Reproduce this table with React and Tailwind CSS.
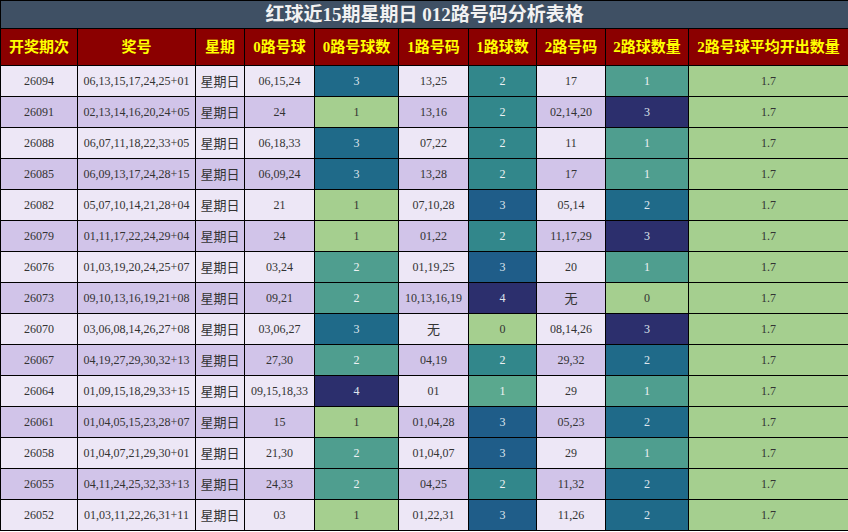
import React from "react";

const rows = [
  ["26094", "06,13,15,17,24,25+01", "06,15,24", 3, "13,25", 2, "17", 1],
  ["26091", "02,13,14,16,20,24+05", "24", 1, "13,16", 2, "02,14,20", 3],
  ["26088", "06,07,11,18,22,33+05", "06,18,33", 3, "07,22", 2, "11", 1],
  ["26085", "06,09,13,17,24,28+15", "06,09,24", 3, "13,28", 2, "17", 1],
  ["26082", "05,07,10,14,21,28+04", "21", 1, "07,10,28", 3, "05,14", 2],
  ["26079", "01,11,17,22,24,29+04", "24", 1, "01,22", 2, "11,17,29", 3],
  ["26076", "01,03,19,20,24,25+07", "03,24", 2, "01,19,25", 3, "20", 1],
  ["26073", "09,10,13,16,19,21+08", "09,21", 2, "10,13,16,19", 4, "无", 0],
  ["26070", "03,06,08,14,26,27+08", "03,06,27", 3, "无", 0, "08,14,26", 3],
  ["26067", "04,19,27,29,30,32+13", "27,30", 2, "04,19", 2, "29,32", 2],
  ["26064", "01,09,15,18,29,33+15", "09,15,18,33", 4, "01", 1, "29", 1],
  ["26061", "01,04,05,15,23,28+07", "15", 1, "01,04,28", 3, "05,23", 2],
  ["26058", "01,04,07,21,29,30+01", "21,30", 2, "01,04,07", 3, "29", 1],
  ["26055", "04,11,24,25,32,33+13", "24,33", 2, "04,25", 2, "11,32", 2],
  ["26052", "01,03,11,22,26,31+11", "03", 1, "01,22,31", 3, "11,26", 2],
];

// colour scale per column (min..max of each column)
const zeroColors = {
  1: "bg-[#a5cf8f] text-[#333]",
  2: "bg-[#4f9e8f] text-[#eef2f4]",
  3: "bg-[#1f6a89] text-[#dfe6ee]",
  4: "bg-[#2c2f6d] text-[#dfe6ee]",
};
const oneColors = {
  0: "bg-[#a5cf8f] text-[#333]",
  1: "bg-[#5aa88e] text-[#eef2f4]",
  2: "bg-[#32878b] text-[#eef2f4]",
  3: "bg-[#1f5d89] text-[#dfe6ee]",
  4: "bg-[#2c2f6d] text-[#dfe6ee]",
};
const twoColors = {
  0: "bg-[#a5cf8f] text-[#333]",
  1: "bg-[#4f9e8f] text-[#eef2f4]",
  2: "bg-[#1f6a89] text-[#dfe6ee]",
  3: "bg-[#2c2f6d] text-[#dfe6ee]",
};

const headers = [
  "开奖期次",
  "奖号",
  "星期",
  "0路号球",
  "0路号球数",
  "1路号码",
  "1路球数",
  "2路号码",
  "2路球数量",
  "2路号球平均开出数量",
];

const font = "font-['Liberation_Serif','Noto_Sans_CJK_SC',serif]";
const cjk = "font-['Noto_Sans_CJK_SC',sans-serif]";

export default function App() {
  return (
    <div className={`w-[848px] h-[532px] bg-white overflow-hidden ${font}`}>
      <table className="w-[848px] table-fixed border-collapse border border-black text-center">
        <colgroup>
          <col className="w-[77px]" />
          <col className="w-[118px]" />
          <col className="w-[49px]" />
          <col className="w-[70px]" />
          <col className="w-[84px]" />
          <col className="w-[70px]" />
          <col className="w-[68px]" />
          <col className="w-[69px]" />
          <col className="w-[83px]" />
          <col className="w-[160px]" />
        </colgroup>
        <thead>
          <tr className="h-[28px]">
            <th
              colSpan={10}
              className="bg-[#3f5064] text-[#f2f2f2] text-[19px] font-bold border border-black p-0 leading-none"
            >
              红球近15期星期日 012路号码分析表格
            </th>
          </tr>
          <tr className="h-[37px] bg-[#8b0000]">
            {headers.map((h) => (
              <th key={h} className="border border-black text-[#ffff00] text-[15px] font-bold p-0 whitespace-nowrap">
                {h}
              </th>
            ))}
          </tr>
        </thead>
        <tbody className="text-[12px] text-[#333]">
          {rows.map((r, i) => {
            const bg = i % 2 === 0 ? "bg-[#ede7f6]" : "bg-[#d1c4e9]";
            const cell = `border border-black p-0 whitespace-nowrap ${bg}`;
            return (
              <tr key={r[0]} className="h-[31px]">
                <td className={cell}>{r[0]}</td>
                <td className={cell}>{r[1]}</td>
                <td className={`${cell} ${cjk} text-[13px]`}>星期日</td>
                <td className={cell}>{r[2]}</td>
                <td className={`border border-black p-0 ${zeroColors[r[3]]}`}>{r[3]}</td>
                <td className={`${cell} ${r[4] === "无" ? cjk + " text-[13px]" : ""}`}>{r[4]}</td>
                <td className={`border border-black p-0 ${oneColors[r[5]]}`}>{r[5]}</td>
                <td className={`${cell} ${r[6] === "无" ? cjk + " text-[13px]" : ""}`}>{r[6]}</td>
                <td className={`border border-black p-0 ${twoColors[r[7]]}`}>{r[7]}</td>
                <td className="border border-black p-0 bg-[#a5cf8f] text-[#333]">1.7</td>
              </tr>
            );
          })}
        </tbody>
      </table>
    </div>
  );
}
